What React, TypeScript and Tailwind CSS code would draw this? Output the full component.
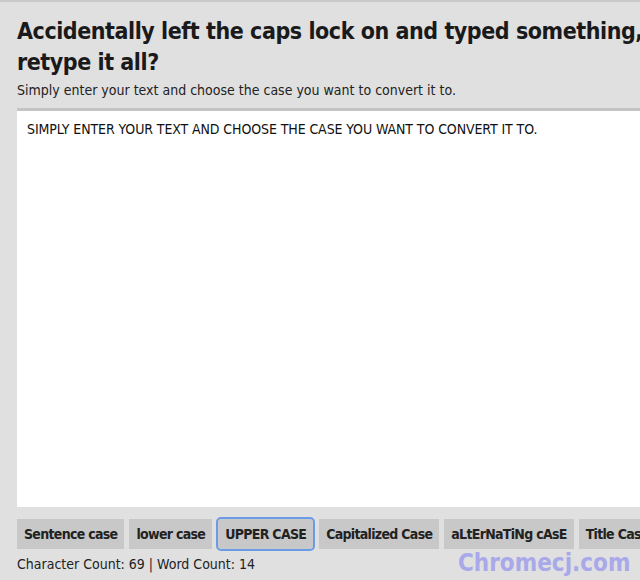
import React from "react";

const font = { fontFamily: '"DejaVu Sans Condensed", "DejaVu Sans", sans-serif' };

export default function App() {
  const text = "SIMPLY ENTER YOUR TEXT AND CHOOSE THE CASE YOU WANT TO CONVERT IT TO.";
  const buttons = [
    "Sentence case",
    "lower case",
    "UPPER CASE",
    "Capitalized Case",
    "aLtErNaTiNg cAsE",
    "Title Case",
  ];
  return (
    <div
      className="relative w-[640px] h-[580px] overflow-hidden bg-[#e0e0e0] border-t-2 border-[#c9c9c9] text-[#111]"
      style={font}
    >
      <div className="pl-[17px] pt-[14px] w-[760px]">
        <h1 className="text-[23px] leading-[31px] font-bold tracking-[-0.45px] text-[#1a1a1a]">
          <span className="block whitespace-nowrap">
            Accidentally left the caps lock on and typed something, but can't be bothered to
          </span>
          <span className="block">retype it all?</span>
        </h1>
        <p className="mt-[3px] text-[14px] leading-[18px] text-[#222]">
          Simply enter your text and choose the case you want to convert it to.
        </p>
        <div className="mt-[9px] h-[399px] bg-white border-t-[3px] border-[#c4c4c4] px-[10px] pt-[9px] text-[14px] leading-[18px] tracking-[-0.1px] text-[#111]">
          {text}
        </div>
        <div className="mt-[12px] flex gap-[5px] items-center">
          {buttons.map((b) => (
            <div
              key={b}
              className={
                "shrink-0 h-[30px] px-[7px] flex items-center bg-[#c8c8c8] text-[14px] font-bold tracking-[-0.7px] text-[#222] whitespace-nowrap " +
                (b === "UPPER CASE" ? "rounded-[3px] outline-2 outline-[#6b9be6] outline-offset-0 mx-[1px]" : "")
              }
            >
              {b}
            </div>
          ))}
        </div>
        <p className="mt-[6px] text-[14px] leading-[18px] text-[#222]">
          Character Count: 69 | Word Count: 14
        </p>
      </div>
      <div className="absolute left-[458px] top-[543px] text-[24px] font-bold text-[#a9a9ea]">
        Chromecj.com
      </div>
    </div>
  );
}
